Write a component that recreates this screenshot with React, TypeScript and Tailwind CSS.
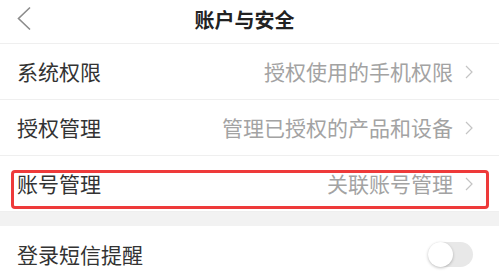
import React from 'react';

const font = { fontFamily: '"Noto Sans CJK SC", "Noto Sans", sans-serif' };

const Chevron = () => (
  <svg width="8" height="14" viewBox="0 0 8 14" className="ml-[12px] shrink-0">
    <path d="M1 1 L7 7 L1 13" fill="none" stroke="#c4c4c4" strokeWidth="1.2" />
  </svg>
);

const Row = ({ label, value, children }: { label: string; value?: string; children?: React.ReactNode }) => (
  <div className="relative flex items-center justify-between h-[56px] pl-[17px] pr-[26px] border-b border-[#efefef]">
    <span className="text-[21px] text-[#333333] leading-none">{label}</span>
    {value && (
      <div className="flex items-center">
        <span className="text-[21px] text-[#a3a3a3] leading-none">{value}</span>
        <Chevron />
      </div>
    )}
    {children}
  </div>
);

export default function App() {
  return (
    <div className="w-[499px] h-[279px] overflow-hidden bg-white" style={font}>
      <div className="relative flex items-center justify-center h-[44px] border-b border-[#efefef]">
        <svg width="16" height="25" viewBox="0 0 16 25" className="absolute left-[16px] top-[6px]">
          <path d="M14 1.5 L2.5 12.5 L14 23.5" fill="none" stroke="#8c8c8c" strokeWidth="1.6" />
        </svg>
        <span className="text-[20px] font-bold text-[#222222] leading-none -mt-[4px] -ml-[10px]">账户与安全</span>
      </div>
      <Row label="系统权限" value="授权使用的手机权限" />
      <Row label="授权管理" value="管理已授权的产品和设备" />
      <Row label="账号管理" value="关联账号管理">
        <div className="absolute left-[11px] right-[10px] top-[14px] h-[39px] border-[3px] border-[#ee3a3a] rounded-[4px]" />
      </Row>
      <div className="h-[14px] bg-[#f2f2f2]" />
      <div className="flex items-center justify-between h-[56px] pl-[17px] pr-[26px]">
        <span className="text-[21px] text-[#333333] leading-none">登录短信提醒</span>
        <div className="relative w-[45px] h-[25px] rounded-full bg-[#e8e8e8]">
          <div className="absolute left-0 top-0 w-[25px] h-[25px] rounded-full bg-white shadow-[0_1px_3px_rgba(0,0,0,0.25)]" />
        </div>
      </div>
    </div>
  );
}
